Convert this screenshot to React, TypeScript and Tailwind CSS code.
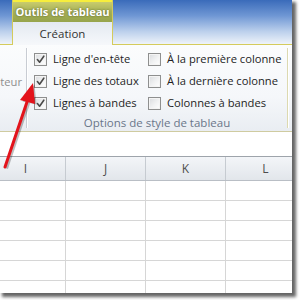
const FONT = { fontFamily: '"Open Sans", "Noto Sans", sans-serif' }

const OPTIONS: { label: string; checked: boolean }[][] = [
  [
    { label: "Ligne d'en-tête", checked: true },
    { label: 'À la première colonne', checked: false },
  ],
  [
    { label: 'Ligne des totaux', checked: true },
    { label: 'À la dernière colonne', checked: false },
  ],
  [
    { label: 'Lignes à bandes', checked: true },
    { label: 'Colonnes à bandes', checked: false },
  ],
]

const COLS = ['I', 'J', 'K', 'L']
const ROWS = 6

function Checkbox({ checked }: { checked: boolean }) {
  return (
    <span className="w-[13px] h-[13px] shrink-0 border border-[#8e8f8f] bg-[linear-gradient(135deg,#d9dbde_0%,#f1f2f3_55%,#ffffff_100%)] shadow-[inset_0_0_0_1px_#f4f4f4] flex items-center justify-center">
      {checked ? (
        <svg width="11" height="11" viewBox="0 0 11 11">
          <path d="M2.4 5.6 L4.6 8.2 L8.8 2.2" fill="none" stroke="#4a4a4a" strokeWidth="1.6" strokeLinecap="round" strokeLinejoin="round" />
        </svg>
      ) : null}
    </span>
  )
}

function Option({ label, checked }: { label: string; checked: boolean }) {
  return (
    <div className="flex items-center gap-[6px]">
      <Checkbox checked={checked} />
      <span className="text-[11.2px] leading-[16px] text-[#1e1e1e] whitespace-nowrap">{label}</span>
    </div>
  )
}

export default function App() {
  return (
    <div className="w-[300px] h-[300px] bg-white" style={FONT}>
      <div className="relative w-[292px] h-[293px] overflow-hidden bg-white shadow-[3px_3px_3px_1px_rgba(0,0,0,0.6)]">
        {/* contextual tab strip */}
        <div className="h-[45px] flex bg-[linear-gradient(to_bottom,#3a6bba_0%,#6f97d4_35%,#bcd0ec_70%,#f2f6fb_100%)]">
          <div className="w-[12px] border-b border-[#d4cb5c]" />
          <div className="w-[101px] flex flex-col border-x border-[#d4cb5c]">
            <div className="h-[22px] flex items-center justify-center border-t-[2px] border-[#f7ee3c] bg-[linear-gradient(to_bottom,#c9cc6c_0%,#a8b25a_45%,#96a44b_100%)]">
              <span className="text-[11.2px] font-bold text-white whitespace-nowrap tracking-[-0.1px] [text-shadow:0_0_2px_rgba(60,70,20,0.8)]">
                Outils de tableau
              </span>
            </div>
            <div className="flex-1 flex items-center justify-center bg-[linear-gradient(to_bottom,#e3e9f1_0%,#f6f8fb_100%)]">
              <span className="text-[11.5px] text-[#333]">Création</span>
            </div>
          </div>
          <div className="flex-1 border-b border-[#d4cb5c]" />
        </div>

        {/* ribbon body */}
        <div className="h-[87px] flex border-b border-[#cfcba0] bg-[linear-gradient(to_bottom,#fbfcfd_0%,#f5f7fa_60%,#e9edf2_100%)]">
          <div className="w-[26px] overflow-hidden flex justify-end pr-[4px] pt-[29px]">
            <span className="text-[11.2px] leading-[16px] text-[#8e8e8e] whitespace-nowrap">teur</span>
          </div>
          <div className="w-[1px] my-[3px] bg-[#c8ccd3] shadow-[1px_0_0_#ffffff]" />
          <div className="w-[260px] flex flex-col">
            <div className="pt-[3px] pl-[7px]">
              {OPTIONS.map((row, i) => (
                <div key={i} className="h-[22px] grid grid-cols-[114px_1fr] items-center">
                  {row.map((o) => (
                    <Option key={o.label} label={o.label} checked={o.checked} />
                  ))}
                </div>
              ))}
            </div>
            <div className="mt-[1px] h-[16px] leading-[16px] text-center text-[11.5px] text-[#6a7689]">
              Options de style de tableau
            </div>
          </div>
          <div className="w-[1px] my-[3px] bg-[#dcd9b0] shadow-[1px_0_0_#ffffff]" />
          <div className="flex-1" />
        </div>

        {/* formula bar gap */}
        <div className="h-[24px] bg-white" />

        {/* sheet */}
        <div className="ml-[-14px] w-[320px]">
          <div className="h-[25px] grid grid-cols-[80px_80px_80px_80px] border-y border-t-[#9ea4ab] border-b-[#b9bec5] bg-[linear-gradient(to_bottom,#f3f5f8_0%,#e2e6eb_100%)]">
            {COLS.map((c) => (
              <div key={c} className="flex items-center justify-center border-r border-[#c6cbd1] text-[12px] text-[#4d4d4d]">
                {c}
              </div>
            ))}
          </div>
          {Array.from({ length: ROWS }).map((_, r) => (
            <div key={r} className="h-[20px] grid grid-cols-[80px_80px_80px_80px] border-b border-[#d6d6d6]">
              {COLS.map((c) => (
                <div key={c} className="border-r border-[#d6d6d6]" />
              ))}
            </div>
          ))}
        </div>

        {/* red pointer arrow */}
        <svg className="absolute left-0 top-0 pointer-events-none" width="292" height="293" viewBox="0 0 292 293">
          <g transform="translate(1.5,1.5)" opacity="0.25">
            <line x1="5" y1="167" x2="28" y2="99" stroke="#000" strokeWidth="3" />
            <polygon points="33,83 21,100 35,103" fill="#000" />
          </g>
          <line x1="5" y1="167" x2="28" y2="99" stroke="#e3131b" strokeWidth="3" strokeLinecap="round" />
          <polygon points="33,83 20,100 35,104" fill="#e3131b" />
        </svg>
      </div>
    </div>
  )
}
